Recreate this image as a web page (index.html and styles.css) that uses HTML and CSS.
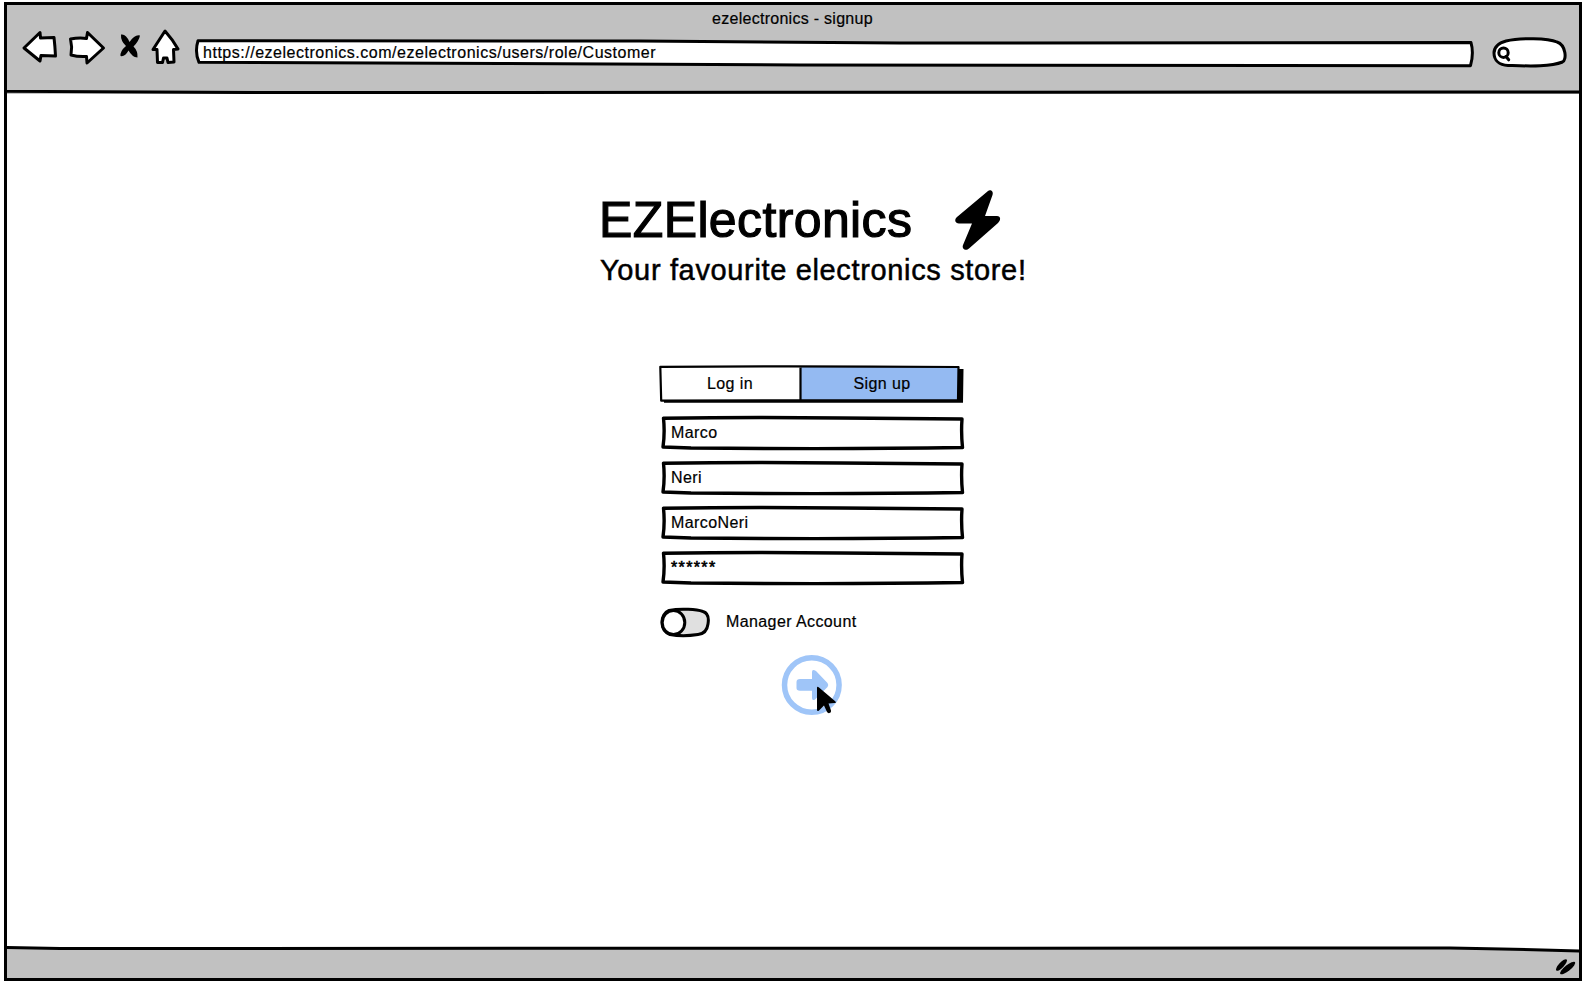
FILE: index.html
```
<!DOCTYPE html>
<html lang="en">
<head>
<meta charset="utf-8">
<title>ezelectronics - signup</title>
<link rel="stylesheet" href="styles.css">
</head>
<body>
<div class="window">
  <header class="chrome">
    <div class="window-title"><span>ezelectronics - signup</span></div>
    <div class="toolbar">
      <svg class="nav-icons" viewBox="20 28 162 38">
        <g class="ink white">
          <path d="M24 48 L40 32.500 L40.500 38 L54 37.500 Q55 46 55.500 56 L41 55.500 L40 61 Z"/>
          <path d="M70.500 39 Q79 37.500 86.500 38.500 L87.500 32.500 L103.500 48 L87 63 L86.500 56.500 Q78 57 71 55 Q72.500 47 70.500 39 Z"/>
          <path d="M165 31 L153 49.500 L157 49.500 L157.500 62.500 L162.500 62.500 L163.500 58 L167 58 L168 62.500 L174 62 L173.500 49.500 L178 49 Q173 40 165 31 Z"/>
        </g>
        <path d="M121 34.500 Q126 33.500 129.500 42 Q135 34 140 35.500 Q139 41 133.500 46.500 Q138 51 137.500 57.500 Q132 57 128.500 50.500 Q125 57 120.500 56 Q120 51 126 46 Q120.500 41 121 34.500 Z"/>
      </svg>
      <div class="address">
        <svg class="sketch" viewBox="195 38 1280 30"><path class="ink white" d="M198 40.800 L640 41 L900 43 L1471 42.600 Q1474 53 1470.500 65.700 L800 65 L500 63.500 L199 62.300 Q194.500 52 198 40.800 Z"/></svg>
        <span class="address-text">https://ezelectronics.com/ezelectronics/users/role/Customer</span>
      </div>
      <svg class="search" viewBox="1491 36 78 33">
        <path class="ink white" d="M1506 41 C1520 37.500 1548 38 1557 42 C1566 45 1567 60 1562.500 62 C1550 67 1528 66 1508 65.500 C1499 65 1494 60 1494 53 C1494 48 1498 43 1506 41 Z"/>
        <circle class="ink hollow" cx="1503.500" cy="52.700" r="4.700"/>
        <path class="ink hollow" d="M1506 56.500 L1508.700 59.800"/>
      </svg>
    </div>
    <svg class="divider" viewBox="0 0 1578 4" preserveAspectRatio="none"><path class="ink hollow" d="M0 1.300 L260 2.600 L1578 1.900"/></svg>
  </header>

  <main class="page">
    <section class="brand">
      <div class="brand-row">
        <h1><span>EZElectronics</span></h1>
        <svg class="bolt" viewBox="954 188 48 64"><path d="M988 191 C990 189 994 191 992.500 195 L985 216 L997 216 C1001 216 1001 220 998 223 L969 248.500 C966 251.500 961.500 249 963 245 L972 223.500 L959 223.500 C955 223.500 954 219.500 957 217 Z"/></svg>
      </div>
      <p class="tagline">Your favourite electronics store!</p>
    </section>

    <form class="signup">
      <div class="tabs">
        <svg class="sketch" viewBox="658 364 308 40">
          <path d="M664 399 L958 399 L959 369 L963.500 369 L963 402.700 L664 402.700 Z"/>
          <path class="white" d="M660.500 366.500 H801 V400.500 H661.500 Z"/>
          <path class="blue" d="M801 366.500 H958 V400.500 H801 Z"/>
          <path class="ink thin hollow" d="M660.300 366.800 Q800 366 958.500 367 L958 400 L661.200 400.700 Z M800.500 367 V400"/>
        </svg>
        <span class="tab tab-login"><span>Log in</span></span>
        <span class="tab tab-signup"><span>Sign up</span></span>
      </div>
      <div class="field">
        <svg class="sketch" viewBox="0 0 304 36"><use href="#fieldbox"/></svg><span>Marco</span>
      </div>
      <div class="field">
        <svg class="sketch" viewBox="0 0 304 36"><use href="#fieldbox"/></svg><span>Neri</span>
      </div>
      <div class="field">
        <svg class="sketch" viewBox="0 0 304 36"><use href="#fieldbox"/></svg><span>MarcoNeri</span>
      </div>
      <div class="field">
        <svg class="sketch" viewBox="0 0 304 36"><use href="#fieldbox"/></svg><span class="password">******</span>
      </div>
      <div class="manager">
        <svg class="toggle" viewBox="660 606 51 34">
          <path class="ink grey" d="M669 610.500 C681 608 697 609.500 703 611.500 C708 613 709 618 708 624 C707 632 703 634 698 634.500 C688 636 678 636 670 634.500 C659 630 660 614 669 610.500 Z"/>
          <ellipse class="ink white" cx="673.500" cy="622.500" rx="11.300" ry="12"/>
        </svg>
        <span class="manager-label">Manager Account</span>
      </div>
      <div class="submit">
        <svg class="go" viewBox="780 653 64 64">
          <circle class="ring" cx="811.800" cy="685" r="27.300"/>
          <path class="arrow" d="M800 679 Q796.500 679 796.500 682 V688 Q796.500 690.700 800 690.700 H812 V698 Q812 701 815 699.500 L827.500 687 Q829 685 827.500 683 L816 671 Q812 668.500 812 672 V679 Z"/>
          <path d="M817 688 Q817 686 819 687.500 L835.500 701.500 Q836.500 703 834.500 703 L828.500 703.500 L831 710.500 Q831.500 712.500 829.500 713 Q828 713.500 827 712 L824 705.500 L819 710.500 Q817 712 817 709.500 Z"/>
        </svg>
      </div>
    </form>
  </main>

  <footer class="status">
    <svg class="sketch" viewBox="7 946 1572 32">
      <path class="grey-bar" d="M7 948 H1450 L1579 951 V978 H7 Z"/>
      <path class="ink hollow" d="M7 947.500 L60 948.500 L1450 948 Q1520 949 1579 951"/>
      <ellipse cx="1561.500" cy="965" rx="7.600" ry="2.600" transform="rotate(-47 1561.500 965)"/>
      <ellipse cx="1567.700" cy="968" rx="9.400" ry="2.900" transform="rotate(-39 1567.700 968)"/>
    </svg>
  </footer>
</div>
<svg class="defs"><defs><path id="fieldbox" class="ink white" d="M2.500 3.200 Q90 2 180 3 L301 4 Q300 18 301.500 32.500 Q180 34.500 30 33 L2 32 Q4 18 2.500 3.200 Z"/></defs></svg>
</body>
</html>
```

FILE: styles.css
```
* { box-sizing: border-box; }
body {
  margin: 0;
  padding: 2px 0 0 4px;
  height: 981px;
  overflow: hidden;
  background: #fff;
  color: #000;
  font: 16px/20px "Liberation Sans", Arial, sans-serif;
  -webkit-text-stroke: 0.2px #000;
}
svg { display: block; }
.defs { position: absolute; width: 0; height: 0; }
.ink { stroke: #000; stroke-width: 3; stroke-linejoin: round; stroke-linecap: round; }
.thin { stroke-width: 2.2; }
.white { fill: #fff; }
.hollow { fill: none; }
.grey { fill: #e0e0e0; }
.blue { fill: #94baf2; }
.grey-bar { fill: #c1c1c1; }
.sketch { position: absolute; inset: 0; width: 100%; height: 100%; z-index: -1; overflow: visible; }

.window {
  display: flex;
  flex-direction: column;
  width: 1578px;
  height: 979px;
  border: 3px solid #000;
}
.chrome { display: flex; flex-direction: column; height: 89px; background: #c1c1c1; }
.window-title { height: 23px; padding: 4px 0 0 705px; letter-spacing: 0.28px; }
.toolbar { display: flex; align-items: flex-start; padding-left: 13px; flex: 1; }
.nav-icons { width: 162px; height: 38px; }
.address { position: relative; isolation: isolate; width: 1280px; height: 30px; margin: 10px 16px 0 13px; padding: 5px 0 0 8px; letter-spacing: 0.52px; }
.search { width: 78px; height: 33px; margin-top: 8px; }
.divider { width: 100%; height: 4px; }

.page { flex: 1; display: flex; flex-direction: column; }
.brand { margin: 94px 0 0 592px; }
.brand-row { display: flex; height: 64px; }
h1 { margin: 0; width: 355px; padding-top: 2px; font-size: 50px; line-height: 60px; font-weight: 400; letter-spacing: 0.38px; -webkit-text-stroke: 1.2px #000; }
.bolt { width: 48px; height: 64px; }
.tagline { margin: 0 0 0 1px; font-size: 29px; line-height: 36px; letter-spacing: 0.65px; -webkit-text-stroke: 0.5px #000; }

.signup { width: 308px; margin: 76px 0 0 651px; letter-spacing: 0.4px; }
.tabs { position: relative; isolation: isolate; display: flex; height: 40px; margin-bottom: 11px; padding-top: 10px; text-align: center; }
.tab-login { width: 144px; }
.tab-signup { width: 160px; }
.field { position: relative; isolation: isolate; width: 304px; height: 36px; margin: 0 0 9px 3px; padding: 8px 0 0 10px; }
.field .ink, #fieldbox { stroke-width: 3.4; }
.password { letter-spacing: 1.35px; -webkit-text-stroke: 0.6px #000; }
.manager { display: flex; gap: 15px; margin: 20px 0 0 2px; }
.toggle { width: 51px; height: 34px; }
.manager-label { padding-top: 6px; }
.submit { margin: 13px 0 0 122px; }
.go { width: 64px; height: 64px; }
.ring { fill: none; stroke: #9fc5f8; stroke-width: 5.5; }
.arrow { fill: #9fc5f8; }
.status { position: relative; isolation: isolate; height: 32px; }
```
